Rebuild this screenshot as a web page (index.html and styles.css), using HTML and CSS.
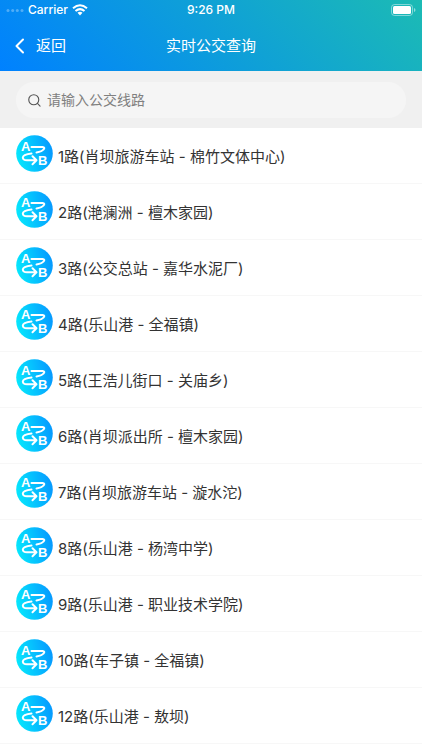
FILE: index.html
```html
<!DOCTYPE html>
<html lang="zh-CN">
<head>
<meta charset="utf-8">
<meta name="viewport" content="width=device-width, initial-scale=1">
<title>实时公交查询</title>
<link rel="stylesheet" href="styles.css">
</head>
<body>
<svg class="defs" aria-hidden="true">
  <defs>
    <linearGradient id="disc" x1="0" y1=".6" x2="1" y2=".4">
      <stop offset="0" stop-color="#06e8fd"/>
      <stop offset="1" stop-color="#0699ff"/>
    </linearGradient>
    <symbol id="route" viewBox="0 0 37 37">
      <circle cx="18.500" cy="18.500" r="18.300" fill="url(#disc)"/>
      <text class="stop" x="5" y="16">A</text>
      <text class="stop" x="22" y="30">B</text>
      <path d="M15.500 12H26.500Q29.500 12.500 27.500 14.500Q26 16.500 20.500 17.500M15.500 18.500Q7 19.500 6.800 22.500Q7 25.300 11 25.300H19.500M16.500 21.300L20.500 25.300L16.500 29.300" fill="none" stroke="#fff" stroke-width="2" stroke-linecap="round" stroke-linejoin="round"/>
    </symbol>
  </defs>
</svg>
<header class="header">
  <div class="status">
    <div class="carrier">
      <svg width="18" height="4" viewBox="0 0 18 4" fill="#fff" opacity=".3" aria-hidden="true"><circle cx="2" cy="2.500" r="1.500"/><circle cx="6.700" cy="2.500" r="1.500"/><circle cx="11.300" cy="2.500" r="1.500"/><circle cx="16" cy="2.500" r="1.500"/></svg>
      <span>Carrier</span>
      <svg width="16" height="12" viewBox="0 0 16 12" fill="none" stroke="#fff" stroke-width="2" aria-hidden="true"><path d="M1 4.200Q8-1.800 15 4.200M3.500 7Q8 3.200 12.500 7"/><path d="M5.500 8.800Q8 6.800 10.500 8.800L8 11.400Z" fill="#fff" stroke="none"/></svg>
    </div>
    <time>9:26 PM</time>
    <svg class="battery" width="25" height="12" viewBox="0 0 25 12" aria-hidden="true"><rect x=".5" y=".5" width="21" height="11" rx="3" fill="none" stroke="#fff" stroke-opacity=".45"/><rect x="2" y="2" width="18" height="8" rx="1.500" fill="#fff"/><path d="M23 4Q24.500 4.500 24.500 6T23 8Z" fill="#fff" fill-opacity=".5"/></svg>
  </div>
  <nav class="bar">
    <a class="back" href="#"><svg width="10" height="16" viewBox="0 0 10 16" fill="none" stroke="#fff" stroke-width="2" stroke-linecap="round" stroke-linejoin="round" aria-hidden="true"><path d="M8 1.500L1.500 8L8 14.500"/></svg>返回</a>
    <h1>实时公交查询</h1>
  </nav>
</header>
<form class="search">
  <label class="field">
    <svg width="13" height="13" viewBox="0 0 14 14" fill="none" stroke="#555" stroke-width="1.200" stroke-linecap="round" aria-hidden="true"><circle cx="6.200" cy="6.200" r="5.400"/><path d="M10.200 10.200L13 13"/></svg>
    <input type="search" placeholder="请输入公交线路" aria-label="请输入公交线路">
  </label>
</form>
<ul class="routes">
  <li><a href="#"><svg class="icon" aria-hidden="true"><use href="#route"/></svg><span>1路(肖坝旅游车站 - 棉竹文体中心)</span></a></li>
  <li><a href="#"><svg class="icon" aria-hidden="true"><use href="#route"/></svg><span>2路(滟澜洲 - 檀木家园)</span></a></li>
  <li><a href="#"><svg class="icon" aria-hidden="true"><use href="#route"/></svg><span>3路(公交总站 - 嘉华水泥厂)</span></a></li>
  <li><a href="#"><svg class="icon" aria-hidden="true"><use href="#route"/></svg><span>4路(乐山港 - 全福镇)</span></a></li>
  <li><a href="#"><svg class="icon" aria-hidden="true"><use href="#route"/></svg><span>5路(王浩儿街口 - 关庙乡)</span></a></li>
  <li><a href="#"><svg class="icon" aria-hidden="true"><use href="#route"/></svg><span>6路(肖坝派出所 - 檀木家园)</span></a></li>
  <li><a href="#"><svg class="icon" aria-hidden="true"><use href="#route"/></svg><span>7路(肖坝旅游车站 - 漩水沱)</span></a></li>
  <li><a href="#"><svg class="icon" aria-hidden="true"><use href="#route"/></svg><span>8路(乐山港 - 杨湾中学)</span></a></li>
  <li><a href="#"><svg class="icon" aria-hidden="true"><use href="#route"/></svg><span>9路(乐山港 - 职业技术学院)</span></a></li>
  <li><a href="#"><svg class="icon" aria-hidden="true"><use href="#route"/></svg><span>10路(车子镇 - 全福镇)</span></a></li>
  <li><a href="#"><svg class="icon" aria-hidden="true"><use href="#route"/></svg><span>12路(乐山港 - 敖坝)</span></a></li>
</ul>
</body>
</html>
```
FILE: styles.css
```css
* { box-sizing: border-box; }
body {
  margin: 0;
  background: #fff;
  color: #333;
  font: 15px/24px Inter, "Noto Sans CJK SC", sans-serif;
}
a { color: inherit; text-decoration: none; }
svg { flex: none; }
.defs { position: absolute; width: 0; height: 0; }
.header {
  color: #fff;
  background: linear-gradient(45deg, #0081ff, #1cbbb4);
}
.status {
  display: grid;
  grid-template-columns: 1fr auto 1fr;
  align-items: center;
  height: 20px;
  padding: 0 6px;
  font-size: 12px;
  font-weight: 500;
  line-height: 20px;
}
.carrier { display: flex; align-items: center; gap: 4px; }
.battery { justify-self: end; }
.bar {
  display: grid;
  grid-template-columns: 1fr auto 1fr;
  align-items: center;
  height: 51px;
  padding: 0 15px;
}
.back { display: flex; align-items: center; gap: 11px; }
h1 { margin: 0; font-size: 15px; font-weight: 400; }
.search { padding: 11px 16px 10px; background: #f0f0f0; }
.field {
  display: flex;
  align-items: center;
  gap: 6px;
  height: 36px;
  padding: 0 12px;
  border-radius: 18px;
  background: #f5f5f5;
}
input {
  flex: 1;
  min-width: 0;
  padding: 0;
  border: 0;
  outline: 0;
  background: none;
  color: #333;
  font: inherit;
  font-size: 14px;
}
input::placeholder { color: #808080; opacity: 1; }
.routes { margin: 0; padding: 0; list-style: none; }
.routes a {
  display: flex;
  align-items: flex-start;
  gap: 5px;
  height: 56px;
  padding: 7px 16px 0;
  border-bottom: 1px solid #f7f7f7;
}
.routes span { padding-top: 10px; }
.icon { width: 37px; height: 37px; }
.stop { fill: #fff; font: 700 13px "Liberation Sans", sans-serif; }
```
